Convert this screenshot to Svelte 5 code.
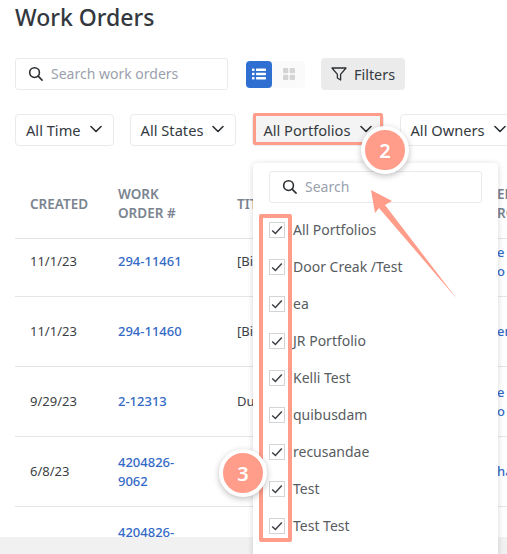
<script lang="ts">
  const filters = ['All Time', 'All States', 'All Portfolios', 'All Owners'];
  const rows = [
    { created: '11/1/23', num: ['294-11461'], title: '[Bi', other: ['e', 'o'] },
    { created: '11/1/23', num: ['294-11460'], title: '[Bi', other: ['er'] },
    { created: '9/29/23', num: ['2-12313'], title: 'Du', other: ['e', 'o'] },
    { created: '6/8/23', num: ['4204826-', '9062'], title: '', other: ['ha'] },
    { created: '', num: ['4204826-', '9063'], title: '', other: [] }
  ];
  const portfolios = ['All Portfolios', 'Door Creak /Test', 'ea', 'JR Portfolio', 'Kelli Test', 'quibusdam', 'recusandae', 'Test', 'Test Test'];
</script>

{#snippet searchIcon()}
  <svg class="sicon" viewBox="0 0 16 16" fill="none" stroke="#2b2f33" stroke-width="1.7">
    <circle cx="7" cy="7" r="5.2" />
    <path d="M10.8 10.8 15 15" stroke-linecap="round" />
  </svg>
{/snippet}

{#snippet chevron()}
  <svg class="chev" viewBox="0 0 12 8" fill="none" stroke="#2b2f33" stroke-width="1.6">
    <path d="M1 1.5 6 6.5 11 1.5" stroke-linecap="round" stroke-linejoin="round" />
  </svg>
{/snippet}

<div class="page">
  <h1>Work Orders</h1>

  <div class="toolbar">
    <div class="search">
      {@render searchIcon()}
      <span>Search work orders</span>
    </div>
    <div class="views">
      <span class="view on">
        <svg viewBox="0 0 14 12" width="14" height="12" fill="#fff">
          <rect x="0" y="0.5" width="2.5" height="2.5" rx="0.6" /><rect x="4" y="0.5" width="10" height="2.5" rx="0.6" />
          <rect x="0" y="4.7" width="2.5" height="2.5" rx="0.6" /><rect x="4" y="4.7" width="10" height="2.5" rx="0.6" />
          <rect x="0" y="8.9" width="2.5" height="2.5" rx="0.6" /><rect x="4" y="8.9" width="10" height="2.5" rx="0.6" />
        </svg>
      </span>
      <span class="view">
        <svg viewBox="0 0 12 12" width="12" height="12" fill="#d4d4d4">
          <rect x="0" y="0" width="5.3" height="5.3" rx="1" /><rect x="6.7" y="0" width="5.3" height="5.3" rx="1" />
          <rect x="0" y="6.7" width="5.3" height="5.3" rx="1" /><rect x="6.7" y="6.7" width="5.3" height="5.3" rx="1" />
        </svg>
      </span>
    </div>
    <div class="filters-btn">
      <svg viewBox="0 0 16 16" width="16" height="16" fill="none" stroke="#2b2f33" stroke-width="1.3" stroke-linejoin="round">
        <path d="M1 2h14L9.6 8.4V14L6.4 12V8.4Z" />
      </svg>
      Filters
    </div>
  </div>

  <div class="chips">
    {#each filters as f, i}
      <div class="chip" class:active={i === 2}>{f}{@render chevron()}</div>
    {/each}
  </div>

  <div class="table">
    <div class="row head">
      <div>CREATED</div>
      <div>WORK<br />ORDER #</div>
      <div>TITLE</div>
      <div>ER<br />RO</div>
    </div>
    {#each rows as r}
      <div class="row">
        <div>{r.created}</div>
        <div class="link">{#each r.num as n}<div>{n}</div>{/each}</div>
        <div>{r.title}</div>
        <div class="link">{#each r.other as o}<div>{o}</div>{/each}</div>
      </div>
    {/each}
  </div>

  <div class="track"></div>

  <!-- dropdown -->
  <div class="menu">
    <div class="search inner">
      {@render searchIcon()}
      <span>Search</span>
    </div>
    <div class="list">
      {#each portfolios as p}
        <div class="opt">
          <span class="box">
            <svg viewBox="0 0 16 16" width="14" height="14" fill="none" stroke="#3c4045" stroke-width="1.7">
              <path d="M2.5 8.5 6.2 12 13.5 4" />
            </svg>
          </span>
          {p}
        </div>
      {/each}
    </div>
  </div>

  <!-- tutorial annotations -->
  <div class="mark m-chip"></div>
  <div class="mark m-list"></div>
  <svg class="arrow" viewBox="0 0 507 554" width="507" height="554">
    <polygon points="371,190 392,201 385,205 457,299 379,208 375,213" fill="#ff9d8a" />
  </svg>
  <div class="badge b2">2</div>
  <div class="badge b3">3</div>
</div>

<style>
  :global(body) { margin: 0; background: #fff; }

  .page {
    position: relative; width: 507px; height: 554px; overflow: hidden;
    font-family: "Noto Sans", "Open Sans", sans-serif; font-size: 14px; color: #343a40;
  }

  h1 { margin: 0; padding: 2px 0 0 15px; font-size: 23px; line-height: 30px; font-weight: 500; color: #33383e; }

  .toolbar { display: flex; align-items: center; margin: 26px 0 0 15px; }

  .search {
    display: flex; align-items: center; gap: 8px; box-sizing: border-box;
    width: 213px; height: 32px; padding: 0 12px 2px; background: #fff;
    border: 1px solid #e9eaec; border-radius: 3px; color: #9aa1ad; font-size: 14px;
  }
  .sicon { width: 15px; height: 15px; flex: none; margin-top: 1px; }

  .views { display: flex; margin-left: 18px; background: #fafafa; border-radius: 4px; }
  .view { display: flex; align-items: center; justify-content: center; width: 26px; height: 27px; }
  .view + .view { width: 33px; }
  .view.on { background: #2e6fd1; border-radius: 4px; }

  .filters-btn {
    display: flex; align-items: center; gap: 7px; box-sizing: border-box;
    height: 32px; margin-left: 16px; padding: 0 10px; background: #ebebeb;
    border-radius: 4px; color: #343a40; font-size: 14.4px;
  }

  .chips { display: flex; gap: 16px; margin: 24px 0 0 15px; width: 560px; }
  .chip {
    display: flex; align-items: center; gap: 9px; box-sizing: border-box; flex: none;
    height: 32px; padding: 0 11px 0 10px; background: #fff; font-size: 14.65px;
    border: 1px solid #e9eaec; border-radius: 4px; color: #343a40;
  }
  .chip.active { background: #f4f4f4; }
  .chev { width: 12px; height: 8px; margin-top: -2px; }

  .table { margin: 19px 0 0 15px; width: 560px; }
  .row {
    display: grid; grid-template-columns: 88px 119px 260px 1fr; box-sizing: border-box;
    padding-left: 15px; height: 70px; align-items: center;
    border-bottom: 1px solid #e4e5e7; font-size: 13px; line-height: 19px; color: #3b3f45;
  }
  .row.head { height: 74px; padding-top: 5px; color: #7a8490; font-weight: 600; font-size: 13.5px; }
  .row:nth-child(2) { height: 58px; padding-bottom: 12px; }
  .link { color: #3369c6; font-weight: 500; }

  .track { position: absolute; left: 0; right: 0; bottom: 0; height: 17px; background: #f1f1f1; }

  .menu {
    position: absolute; left: 253px; top: 163px; width: 245px; height: 400px; box-sizing: border-box;
    padding: 8px 16px 0; background: #fff; border-radius: 4px;
    box-shadow: 0 1px 6px rgba(0, 0, 0, 0.16);
  }
  .search.inner { width: 213px; }
  .list { margin-top: 8px; }
  .opt { display: flex; align-items: center; gap: 8px; height: 37px; color: #585c61; }
  .box {
    display: flex; align-items: center; justify-content: center; flex: none; box-sizing: border-box;
    width: 16px; height: 16px; border: 1px solid #d4d5d7;
  }

  .mark { position: absolute; box-sizing: border-box; border-style: solid; border-color: #ff9d8a; border-radius: 2px; }
  .m-chip { left: 253px; top: 113px; width: 130px; height: 32px; border-width: 3px; }
  .m-list { left: 259px; top: 214px; width: 33px; height: 328px; border-width: 4px; }

  .arrow { position: absolute; left: 0; top: 0; pointer-events: none; }

  .badge {
    position: absolute; width: 48px; height: 48px; box-sizing: border-box; display: flex;
    align-items: center; justify-content: center; border: 4px solid #fff; border-radius: 50%;
    background: #ff9d8a; color: #fff; font-size: 20px; font-weight: 600;
    box-shadow: 0 2px 6px rgba(0, 0, 0, 0.25);
  }
  .b2 { left: 361px; top: 126px; }
  .b3 { left: 219px; top: 449px; }
</style>
